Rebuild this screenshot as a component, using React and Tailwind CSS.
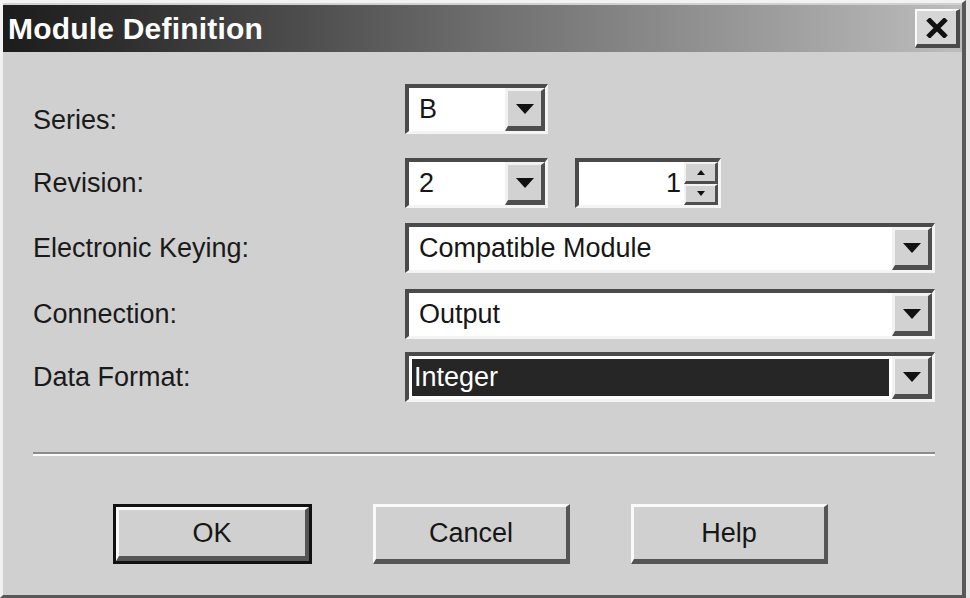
import React from 'react';

const FONT = { fontFamily: '"Liberation Sans", Arial, sans-serif' };

function Arrow() {
    return (
        <svg width="18" height="10" viewBox="0 0 18 10">
            <polygon points="0,0 18,0 9,10" fill="#111" />
        </svg>
    );
}

function Combo({ value, className, selected = false }) {
    return (
        <div className={`flex h-[50px] bg-white border-t-[4px] border-l-[4px] border-b-[3px] border-r-[3px] border-t-[#4a4a4a] border-l-[#4a4a4a] border-b-[#f4f4f4] border-r-[#f4f4f4] ${className}`}>
            <div className="flex-1 p-[3px] flex">
                {selected ? (
                    <div className="flex-1 flex items-center bg-[#262626] text-white pl-[2px]">{value}</div>
                ) : (
                    <div className="flex-1 flex items-center pl-[7px] text-[#161616]">{value}</div>
                )}
            </div>
            <div className="w-[40px] flex items-center justify-center bg-[#d2d2d2] border-t-[3px] border-l-[3px] border-t-[#f2f2f2] border-l-[#f2f2f2] border-b-[5px] border-r-[4px] border-b-[#4e4e4e] border-r-[#4e4e4e]">
                <Arrow />
            </div>
        </div>
    );
}

function Spin({ value }) {
    return (
        <div className="flex h-[50px] w-[146px] bg-white border-t-[4px] border-l-[4px] border-b-[3px] border-r-[3px] border-t-[#4a4a4a] border-l-[#4a4a4a] border-b-[#f4f4f4] border-r-[#f4f4f4]">
            <div className="flex-1 flex items-center justify-end pr-[3px] text-[#161616]">{value}</div>
            <div className="w-[34px] flex flex-col">
                <div className="flex-1 flex items-center justify-center bg-[#d2d2d2] border-t-[2px] border-l-[2px] border-t-[#f2f2f2] border-l-[#f2f2f2] border-b-[3px] border-r-[3px] border-b-[#4e4e4e] border-r-[#4e4e4e]">
                    <svg width="8" height="5" viewBox="0 0 8 5"><polygon points="4,0 8,5 0,5" fill="#111" /></svg>
                </div>
                <div className="flex-1 flex items-center justify-center bg-[#d2d2d2] border-t-[2px] border-l-[2px] border-t-[#f2f2f2] border-l-[#f2f2f2] border-b-[3px] border-r-[3px] border-b-[#4e4e4e] border-r-[#4e4e4e]">
                    <svg width="8" height="5" viewBox="0 0 8 5"><polygon points="0,0 8,0 4,5" fill="#111" /></svg>
                </div>
            </div>
        </div>
    );
}

function Button({ label, isDefault = false }) {
    const inner = (
        <div className="flex-1 flex items-center justify-center bg-[#d0d0d0] border-t-[3px] border-l-[3px] border-t-[#fafafa] border-l-[#fafafa] border-b-[5px] border-r-[4px] border-b-[#555] border-r-[#555] text-[#161616]">
            {label}
        </div>
    );
    if (isDefault) {
        return <div className="flex w-[199px] h-[60px] border-[3px] border-[#111]">{inner}</div>;
    }
    return <div className="flex w-[197px] h-[60px]">{inner}</div>;
}

function Row({ label, children, className = '', labelClass = '' }) {
    return (
        <div className={`flex items-center ${className}`}>
            <div className={`w-[372px] text-[#1a1a1a] ${labelClass}`}>{label}</div>
            {children}
        </div>
    );
}

export default function App() {
    return (
        <div className="w-[970px] h-[598px] bg-[#e6e6e6] overflow-hidden text-[27px] leading-none" style={FONT}>
            <div className="w-[966px] h-[598px] flex flex-col bg-[#d0d0d0] border-t-[3px] border-l-[3px] border-t-[#f2f2f2] border-l-[#f2f2f2] border-r-[4px] border-b-[3px] border-r-[#585858] border-b-[#585858] pt-[2px]">
                <div className="h-[47px] flex items-center justify-between pl-[5px] pr-[2px] bg-gradient-to-r from-[#1c1c1c] via-[#6e6e6e] to-[#bdbdbd]">
                    <span className="text-white font-bold text-[30px] tracking-[0.2px]">Module Definition</span>
                    <div className="w-[45px] h-[39px] flex items-center justify-center bg-[#d6d6d6] border-t-[2px] border-l-[2px] border-t-[#fafafa] border-l-[#fafafa] border-b-[4px] border-r-[4px] border-b-[#4a4a4a] border-r-[#4a4a4a]">
                        <svg width="22" height="20" viewBox="0 0 22 20">
                            <path d="M2 1 L20 19 M20 1 L2 19" stroke="#111" strokeWidth="5" />
                        </svg>
                    </div>
                </div>

                <div className="flex flex-col pl-[30px] pr-[27px]">
                    <Row label="Series:" className="mt-[32px]" labelClass="mt-[22px]">
                        <Combo value="B" className="w-[143px]" />
                    </Row>
                    <Row label="Revision:" className="mt-[24px]">
                        <Combo value="2" className="w-[143px]" />
                        <div className="ml-[27px]">
                            <Spin value="1" />
                        </div>
                    </Row>
                    <Row label="Electronic Keying:" className="mt-[15px]">
                        <Combo value="Compatible Module" className="flex-1" />
                    </Row>
                    <Row label="Connection:" className="mt-[16px]">
                        <Combo value="Output" className="flex-1" />
                    </Row>
                    <Row label="Data Format:" className="mt-[13px]">
                        <Combo value="Integer" className="flex-1" selected />
                    </Row>

                    <div className="mt-[50px] h-[4px] border-t-[2px] border-b-[2px] border-t-[#8c8c8c] border-b-[#fafafa]" />

                    <div className="mt-[48px] flex gap-[61px] pl-[80px]">
                        <Button label="OK" isDefault />
                        <Button label="Cancel" />
                        <Button label="Help" />
                    </div>
                </div>
            </div>
        </div>
    );
}
